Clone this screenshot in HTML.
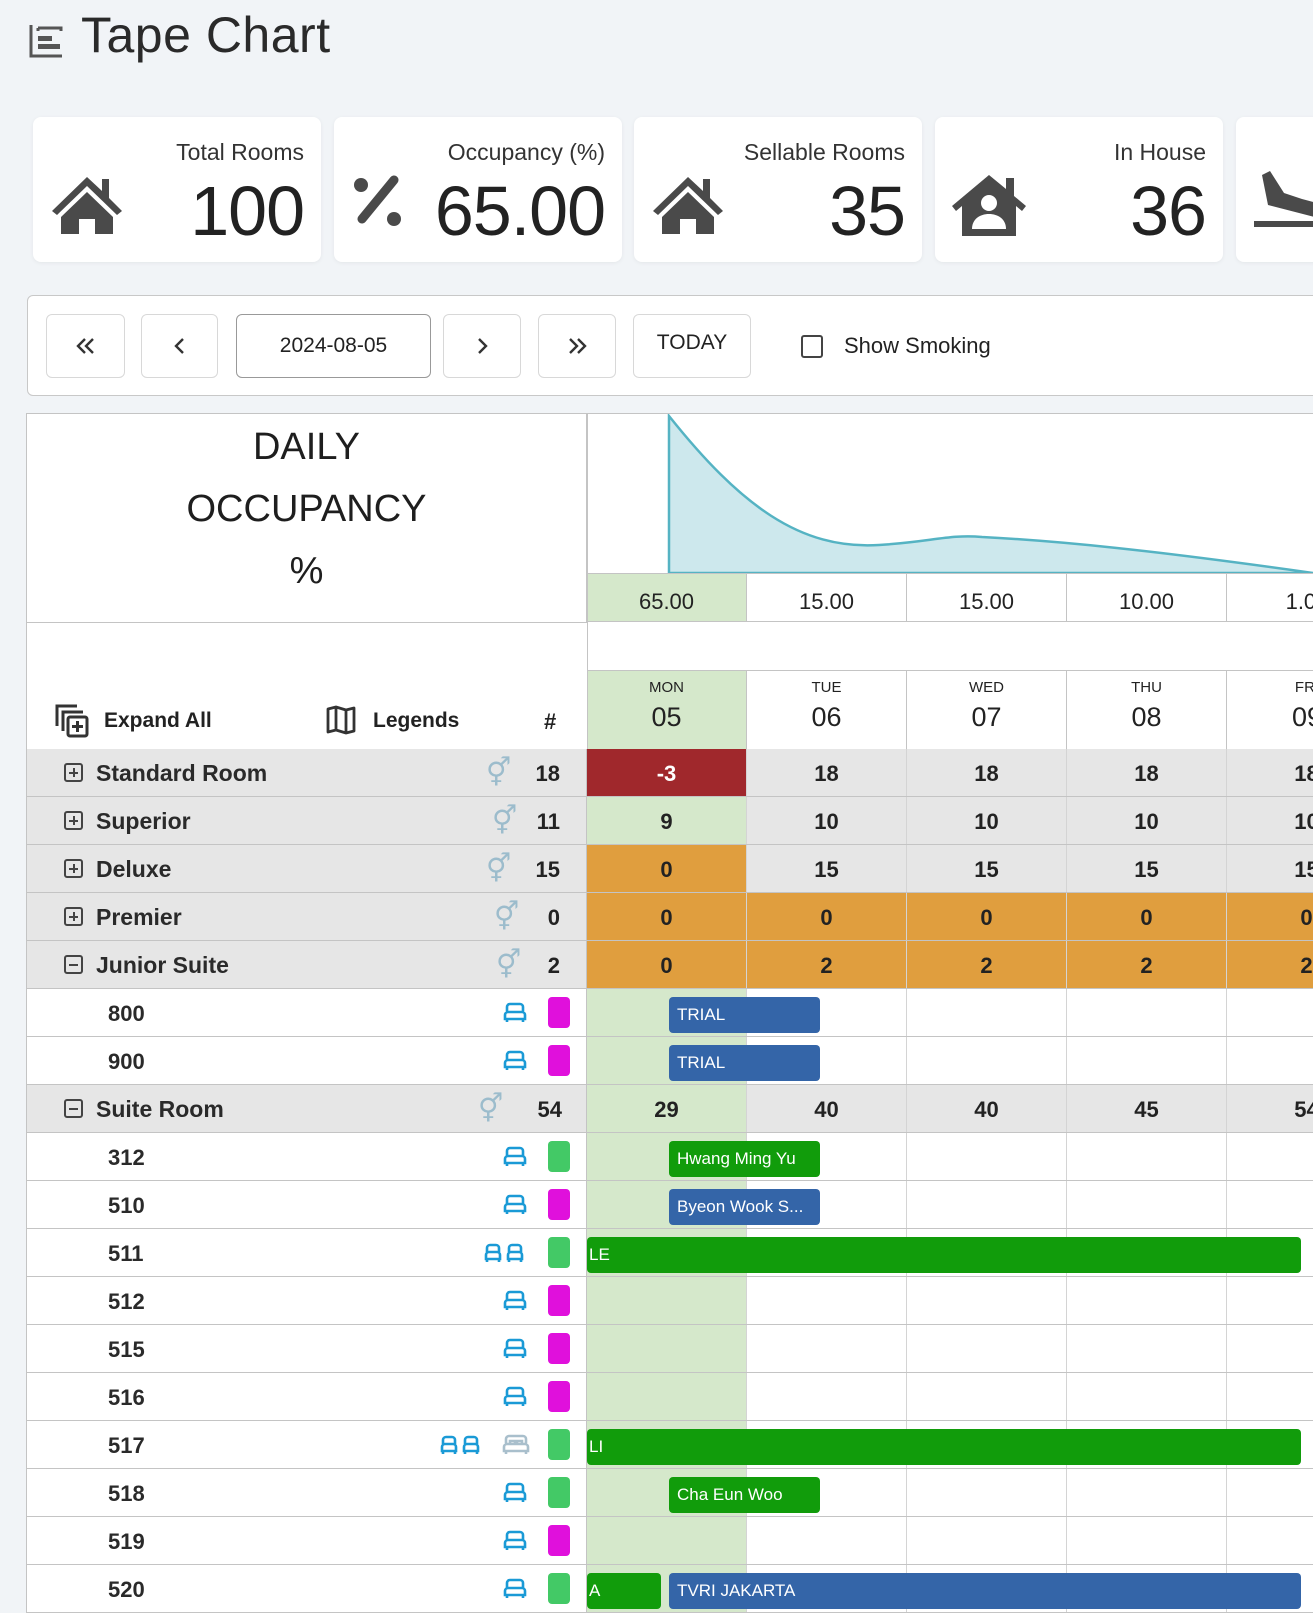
<!DOCTYPE html>
<html><head><meta charset="utf-8">
<style>
*{margin:0;padding:0;box-sizing:border-box}
body{width:1313px;height:1613px;overflow:hidden;background:#f1f4f7;font-family:"Liberation Sans",sans-serif;color:#222;position:relative}
.a{position:absolute}
.card{position:absolute;top:117px;width:288px;height:145px;background:#fff;border-radius:8px;box-shadow:0 1px 4px rgba(0,0,0,.06)}
.card .lb{position:absolute;right:17px;top:22px;font-size:23px;color:#333}
.card .num{position:absolute;right:17px;top:54px;font-size:70px;color:#222;letter-spacing:-1px}
.card svg{position:absolute;left:16px;top:56px}
.btn{position:absolute;top:314px;height:64px;border:1px solid #d8d8d8;border-radius:6px;background:#fff;display:flex;align-items:center;justify-content:center;font-size:21px;color:#222}
.row{position:absolute;left:27px;width:1286px;height:48px;border-bottom:1px solid #c4c4c4}
.lc{position:absolute;left:0;top:0;width:560px;height:47px;border-right:1px solid #c4c4c4}
.g .lc{background:#e6e6e6}
.r .lc{background:#fff}
.c{position:absolute;top:0;width:160px;height:47px;border-right:1px solid #d4d4d4;text-align:center;line-height:49px;font-size:22px;font-weight:bold;color:#222}
.gn{position:absolute;left:69px;top:1px;line-height:47px;font-size:23px;font-weight:bold;color:#2a2a2a}
.rn{position:absolute;left:81px;top:1px;line-height:47px;font-size:22px;font-weight:bold;color:#2a2a2a}
.cnt{position:absolute;right:26px;top:1px;line-height:47px;font-size:22px;font-weight:bold}
.pm{position:absolute;left:37px;top:14px;width:19px;height:19px;border:2px solid #444;border-radius:3px}
.pm:before{content:"";position:absolute;left:3px;top:6.5px;width:9px;height:2px;background:#444}
.pm.p:after{content:"";position:absolute;left:6.5px;top:3px;width:2px;height:9px;background:#444}
.gen{position:absolute;top:4px;font-size:28px;color:#9cbccc;line-height:40px}
.sq{position:absolute;left:521px;top:8px;width:22px;height:31px;border-radius:4px}
.bed{position:absolute;top:13px}
.bar{position:absolute;top:8px;height:36px;border-radius:4px;color:#fff;font-size:17px;line-height:36px;padding-left:8px;white-space:nowrap;overflow:hidden;z-index:2}
.blue{background:#3465a8}.grn{background:#119c0b}
.red{background:#a0282c;color:#fff}.org{background:#e09e3e}.gry{background:#e6e6e6}.lg{background:#d5e8cb}
</style></head><body>

<svg class="a" style="left:28px;top:23px" width="36" height="36" viewBox="0 0 36 36"><path d="M3 2V33H34" fill="none" stroke="#555" stroke-width="3"/><path d="M10 5H33V8M10 5V8" fill="none" stroke="#555" stroke-width="3"/><rect x="10" y="13" width="14" height="5" fill="#555"/><rect x="10" y="21" width="22" height="5" fill="#555"/></svg>
<div class="a" style="left:81px;top:6px;font-size:50px;color:#2a2a2a;letter-spacing:.5px">Tape Chart</div>

<div class="card" style="left:33px">
<svg width="76" height="62" viewBox="0 0 76 62"><path d="M38 4L3 38l5 4 30-29 30 29 5-4-13-13V6h-7v12z" fill="#4a4a4a"/><path d="M38 19L12 44v17h18V46h16v15h18V44z" fill="#4a4a4a"/></svg>
<div class="lb">Total Rooms</div><div class="num">100</div></div>
<div class="card" style="left:334px">
<svg width="60" height="60" viewBox="0 0 60 60"><circle cx="11" cy="12" r="7" fill="#4a4a4a"/><circle cx="44" cy="46" r="7" fill="#4a4a4a"/><path d="M44 7L12 46" stroke="#4a4a4a" stroke-width="9" stroke-linecap="round"/></svg>
<div class="lb">Occupancy (%)</div><div class="num">65.00</div></div>
<div class="card" style="left:634px">
<svg width="76" height="62" viewBox="0 0 76 62"><path d="M38 4L3 38l5 4 30-29 30 29 5-4-13-13V6h-7v12z" fill="#4a4a4a"/><path d="M38 19L12 44v17h18V46h16v15h18V44z" fill="#4a4a4a"/></svg>
<div class="lb">Sellable Rooms</div><div class="num">35</div></div>
<div class="card" style="left:935px">
<svg width="76" height="66" viewBox="0 0 76 66"><path d="M38 2L1 33l4 5 6-5v30h54V33l6 5 4-5-12-10V5h-8v11z" fill="#4a4a4a"/><circle cx="38" cy="30" r="8" fill="#fff"/><path d="M21 56c0-10 8-15 17-15s17 5 17 15z" fill="#fff"/></svg>
<div class="lb">In House</div><div class="num">36</div></div>
<div class="card" style="left:1236px">
<svg width="80" height="66" viewBox="0 0 80 66" style="left:18px;top:48px"><path d="M8 10l8-4 14 22 18 6 30 8-2 14-62-16z" fill="#4a4a4a"/><rect x="0" y="56" width="80" height="6" fill="#4a4a4a"/></svg></div>

<div class="a" style="left:27px;top:295px;width:1300px;height:101px;background:#fff;border:1px solid #c8c8c8;border-radius:6px"></div>
<div class="btn" style="left:46px;width:79px"><svg width="24" height="20" viewBox="0 0 24 20"><path d="M11 3L4 10l7 7M19 3l-7 7 7 7" fill="none" stroke="#333" stroke-width="2.4"/></svg></div>
<div class="btn" style="left:141px;width:77px"><svg width="14" height="20" viewBox="0 0 14 20"><path d="M10 3L3 10l7 7" fill="none" stroke="#333" stroke-width="2.4"/></svg></div>
<div class="btn" style="left:236px;width:195px;border-color:#999">2024-08-05</div>
<div class="btn" style="left:443px;width:78px"><svg width="14" height="20" viewBox="0 0 14 20"><path d="M4 3l7 7-7 7" fill="none" stroke="#333" stroke-width="2.4"/></svg></div>
<div class="btn" style="left:538px;width:78px"><svg width="24" height="20" viewBox="0 0 24 20"><path d="M5 3l7 7-7 7M13 3l7 7-7 7" fill="none" stroke="#333" stroke-width="2.4"/></svg></div>
<div class="btn" style="left:633px;width:118px;align-items:flex-start;padding-top:16px">TODAY</div>
<div class="a" style="left:801px;top:335px;width:22px;height:23px;border:2.5px solid #444;border-radius:3px"></div>
<div class="a" style="left:844px;top:333px;font-size:22px;color:#222">Show Smoking</div>

<div class="a" style="left:26px;top:413px;width:1300px;height:1200px;background:#fff;border-top:1px solid #c4c4c4;border-left:1px solid #c4c4c4"></div>
<div class="a" style="left:27px;top:414px;width:560px;height:209px;border-right:1px solid #c4c4c4;border-bottom:1px solid #c4c4c4;text-align:center;font-size:38px;line-height:62px;padding-top:2px;color:#1e1e1e">DAILY<br>OCCUPANCY<br>%</div>
<svg class="a" style="left:587px;top:414px" width="726" height="160" viewBox="587 414 726 160">
<path d="M669 416 C740 505 800 550 879 545 C930 542 950 534 982 537 C1060 541 1150 550 1313 573 L1313 573 L669 573 Z" fill="#cde8ed" stroke="#55b3c3" stroke-width="2.5"/>
</svg>
<div class="a" style="left:587px;top:573px;width:726px;height:1px;background:#c4c4c4"></div>
<div class="a" style="left:587px;top:621px;width:726px;height:1px;background:#c4c4c4"></div>
<div class="a" style="left:587px;top:670px;width:726px;height:1px;background:#c4c4c4"></div>
<div class="a" style="left:27px;top:749px;width:1286px;height:1px;background:#c4c4c4"></div>
<div class="a lg" style="left:587px;top:574px;width:160px;height:47px"></div>
<div class="a lg" style="left:587px;top:671px;width:160px;height:78px"></div>
<div class="a" style="left:587px;top:574px;width:800px;height:47px;font-size:22px;line-height:56px;color:#222">
<div class="a" style="left:0;width:160px;text-align:center;border-right:1px solid #c4c4c4;height:47px">65.00</div>
<div class="a" style="left:160px;width:160px;text-align:center;border-right:1px solid #c4c4c4;height:47px">15.00</div>
<div class="a" style="left:320px;width:160px;text-align:center;border-right:1px solid #c4c4c4;height:47px">15.00</div>
<div class="a" style="left:480px;width:160px;text-align:center;border-right:1px solid #c4c4c4;height:47px">10.00</div>
<div class="a" style="left:640px;width:160px;text-align:center;height:47px">1.00</div>
</div>
<div class="a" style="left:587px;top:671px;width:800px;height:78px;color:#222;text-align:center">
<div class="a" style="left:0;width:160px;height:78px;border-right:1px solid #c4c4c4"><div style="font-size:15px;margin-top:8px">MON</div><div style="font-size:27px;margin-top:6px">05</div></div>
<div class="a" style="left:160px;width:160px;height:78px;border-right:1px solid #c4c4c4"><div style="font-size:15px;margin-top:8px">TUE</div><div style="font-size:27px;margin-top:6px">06</div></div>
<div class="a" style="left:320px;width:160px;height:78px;border-right:1px solid #c4c4c4"><div style="font-size:15px;margin-top:8px">WED</div><div style="font-size:27px;margin-top:6px">07</div></div>
<div class="a" style="left:480px;width:160px;height:78px;border-right:1px solid #c4c4c4"><div style="font-size:15px;margin-top:8px">THU</div><div style="font-size:27px;margin-top:6px">08</div></div>
<div class="a" style="left:640px;width:160px;height:78px"><div style="font-size:15px;margin-top:8px">FRI</div><div style="font-size:27px;margin-top:6px">09</div></div>
</div>
<div class="a" style="left:587px;top:414px;width:1px;height:335px;background:#c4c4c4"></div>
<svg class="a" style="left:55px;top:704px" width="34" height="34" viewBox="0 0 34 34"><path d="M2 22V2h20" fill="none" stroke="#333" stroke-width="3"/><path d="M8 27V8h20" fill="none" stroke="#333" stroke-width="3"/><rect x="13" y="13" width="19" height="19" rx="2" fill="none" stroke="#333" stroke-width="3"/><path d="M22.5 17v11M17 22.5h11" stroke="#333" stroke-width="3"/></svg>
<div class="a" style="left:104px;top:709px;font-size:21px;font-weight:bold;color:#222">Expand All</div>
<svg class="a" style="left:326px;top:705px" width="30" height="30" viewBox="0 0 30 30"><path d="M2 4l8-2 10 3 8-2v23l-8 2-10-3-8 2z M10 2v23 M20 5v23" fill="none" stroke="#333" stroke-width="2.8" stroke-linejoin="round"/></svg>
<div class="a" style="left:373px;top:709px;font-size:21px;font-weight:bold;color:#222">Legends</div>
<div class="a" style="left:544px;top:709px;font-size:22px;font-weight:bold;color:#222">#</div>

<div class="row g" style="top:749px"><div class="lc"><div class="pm p"></div><div class="gn">Standard Room</div><div class="gen" style="left:459px">⚥</div><div class="cnt">18</div></div>
<div class="c red" style="left:560px">-3</div><div class="c gry" style="left:720px">18</div><div class="c gry" style="left:880px">18</div><div class="c gry" style="left:1040px">18</div><div class="c gry" style="left:1200px">18</div></div>
<div class="row g" style="top:797px"><div class="lc"><div class="pm p"></div><div class="gn">Superior</div><div class="gen" style="left:465px">⚥</div><div class="cnt">11</div></div>
<div class="c lg" style="left:560px">9</div><div class="c gry" style="left:720px">10</div><div class="c gry" style="left:880px">10</div><div class="c gry" style="left:1040px">10</div><div class="c gry" style="left:1200px">10</div></div>
<div class="row g" style="top:845px"><div class="lc"><div class="pm p"></div><div class="gn">Deluxe</div><div class="gen" style="left:459px">⚥</div><div class="cnt">15</div></div>
<div class="c org" style="left:560px">0</div><div class="c gry" style="left:720px">15</div><div class="c gry" style="left:880px">15</div><div class="c gry" style="left:1040px">15</div><div class="c gry" style="left:1200px">15</div></div>
<div class="row g" style="top:893px"><div class="lc"><div class="pm p"></div><div class="gn">Premier</div><div class="gen" style="left:467px">⚥</div><div class="cnt">0</div></div>
<div class="c org" style="left:560px">0</div><div class="c org" style="left:720px">0</div><div class="c org" style="left:880px">0</div><div class="c org" style="left:1040px">0</div><div class="c org" style="left:1200px">0</div></div>
<div class="row g" style="top:941px"><div class="lc"><div class="pm"></div><div class="gn">Junior Suite</div><div class="gen" style="left:469px">⚥</div><div class="cnt">2</div></div>
<div class="c org" style="left:560px">0</div><div class="c org" style="left:720px">2</div><div class="c org" style="left:880px">2</div><div class="c org" style="left:1040px">2</div><div class="c org" style="left:1200px">2</div></div>

<div class="row r" style="top:989px"><div class="lc"><div class="rn">800</div><svg class="bed" style="left:475px" width="26" height="22" viewBox="0 0 26 22"><path d="M5 10V5a3 3 0 0 1 3-3h10a3 3 0 0 1 3 3v5M3 17v-4a3 3 0 0 1 3-3h14a3 3 0 0 1 3 3v4zM5 17v3M21 17v3" fill="none" stroke="#1a9ad6" stroke-width="2.6"/></svg><div class="sq" style="background:#e010dc"></div></div>
<div class="c lg" style="left:560px"></div><div class="c" style="left:720px"></div><div class="c" style="left:880px"></div><div class="c" style="left:1040px"></div><div class="bar blue" style="left:642px;width:151px">TRIAL</div></div>
<div class="row r" style="top:1037px"><div class="lc"><div class="rn">900</div><svg class="bed" style="left:475px" width="26" height="22" viewBox="0 0 26 22"><path d="M5 10V5a3 3 0 0 1 3-3h10a3 3 0 0 1 3 3v5M3 17v-4a3 3 0 0 1 3-3h14a3 3 0 0 1 3 3v4zM5 17v3M21 17v3" fill="none" stroke="#1a9ad6" stroke-width="2.6"/></svg><div class="sq" style="background:#e010dc"></div></div>
<div class="c lg" style="left:560px"></div><div class="c" style="left:720px"></div><div class="c" style="left:880px"></div><div class="c" style="left:1040px"></div><div class="bar blue" style="left:642px;width:151px">TRIAL</div></div>

<div class="row g" style="top:1085px"><div class="lc"><div class="pm"></div><div class="gn">Suite Room</div><div class="gen" style="left:451px">⚥</div><div class="cnt" style="right:24px">54</div></div>
<div class="c lg" style="left:560px">29</div><div class="c gry" style="left:720px">40</div><div class="c gry" style="left:880px">40</div><div class="c gry" style="left:1040px">45</div><div class="c gry" style="left:1200px">54</div></div>

<div class="row r" style="top:1133px"><div class="lc"><div class="rn">312</div><svg class="bed" style="left:475px" width="26" height="22" viewBox="0 0 26 22"><path d="M5 10V5a3 3 0 0 1 3-3h10a3 3 0 0 1 3 3v5M3 17v-4a3 3 0 0 1 3-3h14a3 3 0 0 1 3 3v4zM5 17v3M21 17v3" fill="none" stroke="#1a9ad6" stroke-width="2.6"/></svg><div class="sq" style="background:#43c966"></div></div>
<div class="c lg" style="left:560px"></div><div class="c" style="left:720px"></div><div class="c" style="left:880px"></div><div class="c" style="left:1040px"></div><div class="bar grn" style="left:642px;width:151px">Hwang Ming Yu</div></div>
<div class="row r" style="top:1181px"><div class="lc"><div class="rn">510</div><svg class="bed" style="left:475px" width="26" height="22" viewBox="0 0 26 22"><path d="M5 10V5a3 3 0 0 1 3-3h10a3 3 0 0 1 3 3v5M3 17v-4a3 3 0 0 1 3-3h14a3 3 0 0 1 3 3v4zM5 17v3M21 17v3" fill="none" stroke="#1a9ad6" stroke-width="2.6"/></svg><div class="sq" style="background:#e010dc"></div></div>
<div class="c lg" style="left:560px"></div><div class="c" style="left:720px"></div><div class="c" style="left:880px"></div><div class="c" style="left:1040px"></div><div class="bar blue" style="left:642px;width:151px">Byeon Wook S...</div></div>
<div class="row r" style="top:1229px"><div class="lc"><div class="rn">511</div><svg class="bed" style="left:457px" width="44" height="22" viewBox="0 0 44 22"><path d="M3 10V6a3 3 0 0 1 3-3h6a3 3 0 0 1 3 3v4M2 17v-4a3 3 0 0 1 3-3h8a3 3 0 0 1 3 3v4zM3 17v3M15 17v3" fill="none" stroke="#1a9ad6" stroke-width="2.6"/><path d="M25 10V6a3 3 0 0 1 3-3h6a3 3 0 0 1 3 3v4M24 17v-4a3 3 0 0 1 3-3h8a3 3 0 0 1 3 3v4zM25 17v3M37 17v3" fill="none" stroke="#1a9ad6" stroke-width="2.6"/></svg><div class="sq" style="background:#43c966"></div></div>
<div class="c lg" style="left:560px"></div><div class="c" style="left:720px"></div><div class="c" style="left:880px"></div><div class="c" style="left:1040px"></div><div class="bar grn" style="left:560px;width:714px;padding-left:2px">LE</div></div>
<div class="row r" style="top:1277px"><div class="lc"><div class="rn">512</div><svg class="bed" style="left:475px" width="26" height="22" viewBox="0 0 26 22"><path d="M5 10V5a3 3 0 0 1 3-3h10a3 3 0 0 1 3 3v5M3 17v-4a3 3 0 0 1 3-3h14a3 3 0 0 1 3 3v4zM5 17v3M21 17v3" fill="none" stroke="#1a9ad6" stroke-width="2.6"/></svg><div class="sq" style="background:#e010dc"></div></div>
<div class="c lg" style="left:560px"></div><div class="c" style="left:720px"></div><div class="c" style="left:880px"></div><div class="c" style="left:1040px"></div></div>
<div class="row r" style="top:1325px"><div class="lc"><div class="rn">515</div><svg class="bed" style="left:475px" width="26" height="22" viewBox="0 0 26 22"><path d="M5 10V5a3 3 0 0 1 3-3h10a3 3 0 0 1 3 3v5M3 17v-4a3 3 0 0 1 3-3h14a3 3 0 0 1 3 3v4zM5 17v3M21 17v3" fill="none" stroke="#1a9ad6" stroke-width="2.6"/></svg><div class="sq" style="background:#e010dc"></div></div>
<div class="c lg" style="left:560px"></div><div class="c" style="left:720px"></div><div class="c" style="left:880px"></div><div class="c" style="left:1040px"></div></div>
<div class="row r" style="top:1373px"><div class="lc"><div class="rn">516</div><svg class="bed" style="left:475px" width="26" height="22" viewBox="0 0 26 22"><path d="M5 10V5a3 3 0 0 1 3-3h10a3 3 0 0 1 3 3v5M3 17v-4a3 3 0 0 1 3-3h14a3 3 0 0 1 3 3v4zM5 17v3M21 17v3" fill="none" stroke="#1a9ad6" stroke-width="2.6"/></svg><div class="sq" style="background:#e010dc"></div></div>
<div class="c lg" style="left:560px"></div><div class="c" style="left:720px"></div><div class="c" style="left:880px"></div><div class="c" style="left:1040px"></div></div>
<div class="row r" style="top:1421px"><div class="lc"><div class="rn">517</div><svg class="bed" style="left:413px" width="44" height="22" viewBox="0 0 44 22"><path d="M3 10V6a3 3 0 0 1 3-3h6a3 3 0 0 1 3 3v4M2 17v-4a3 3 0 0 1 3-3h8a3 3 0 0 1 3 3v4zM3 17v3M15 17v3" fill="none" stroke="#1a9ad6" stroke-width="2.6"/><path d="M25 10V6a3 3 0 0 1 3-3h6a3 3 0 0 1 3 3v4M24 17v-4a3 3 0 0 1 3-3h8a3 3 0 0 1 3 3v4zM25 17v3M37 17v3" fill="none" stroke="#1a9ad6" stroke-width="2.6"/></svg><svg class="bed" style="left:475px" width="28" height="22" viewBox="0 0 28 22"><path d="M4 10V5a3 3 0 0 1 3-3h14a3 3 0 0 1 3 3v5M8 10V7h5v3M15 10V7h5v3M2 17v-4a3 3 0 0 1 3-3h18a3 3 0 0 1 3 3v4zM4 17v3M24 17v3" fill="none" stroke="#a9bfcc" stroke-width="2.6"/></svg><div class="sq" style="background:#43c966"></div></div>
<div class="c lg" style="left:560px"></div><div class="c" style="left:720px"></div><div class="c" style="left:880px"></div><div class="c" style="left:1040px"></div><div class="bar grn" style="left:560px;width:714px;padding-left:2px">LI</div></div>
<div class="row r" style="top:1469px"><div class="lc"><div class="rn">518</div><svg class="bed" style="left:475px" width="26" height="22" viewBox="0 0 26 22"><path d="M5 10V5a3 3 0 0 1 3-3h10a3 3 0 0 1 3 3v5M3 17v-4a3 3 0 0 1 3-3h14a3 3 0 0 1 3 3v4zM5 17v3M21 17v3" fill="none" stroke="#1a9ad6" stroke-width="2.6"/></svg><div class="sq" style="background:#43c966"></div></div>
<div class="c lg" style="left:560px"></div><div class="c" style="left:720px"></div><div class="c" style="left:880px"></div><div class="c" style="left:1040px"></div><div class="bar grn" style="left:642px;width:151px">Cha Eun Woo</div></div>
<div class="row r" style="top:1517px"><div class="lc"><div class="rn">519</div><svg class="bed" style="left:475px" width="26" height="22" viewBox="0 0 26 22"><path d="M5 10V5a3 3 0 0 1 3-3h10a3 3 0 0 1 3 3v5M3 17v-4a3 3 0 0 1 3-3h14a3 3 0 0 1 3 3v4zM5 17v3M21 17v3" fill="none" stroke="#1a9ad6" stroke-width="2.6"/></svg><div class="sq" style="background:#e010dc"></div></div>
<div class="c lg" style="left:560px"></div><div class="c" style="left:720px"></div><div class="c" style="left:880px"></div><div class="c" style="left:1040px"></div></div>
<div class="row r" style="top:1565px"><div class="lc"><div class="rn">520</div><svg class="bed" style="left:475px" width="26" height="22" viewBox="0 0 26 22"><path d="M5 10V5a3 3 0 0 1 3-3h10a3 3 0 0 1 3 3v5M3 17v-4a3 3 0 0 1 3-3h14a3 3 0 0 1 3 3v4zM5 17v3M21 17v3" fill="none" stroke="#1a9ad6" stroke-width="2.6"/></svg><div class="sq" style="background:#43c966"></div></div>
<div class="c lg" style="left:560px"></div><div class="c" style="left:720px"></div><div class="c" style="left:880px"></div><div class="c" style="left:1040px"></div><div class="bar grn" style="left:560px;width:74px;padding-left:2px">A</div><div class="bar blue" style="left:642px;width:632px">TVRI JAKARTA</div></div>

</body></html>
